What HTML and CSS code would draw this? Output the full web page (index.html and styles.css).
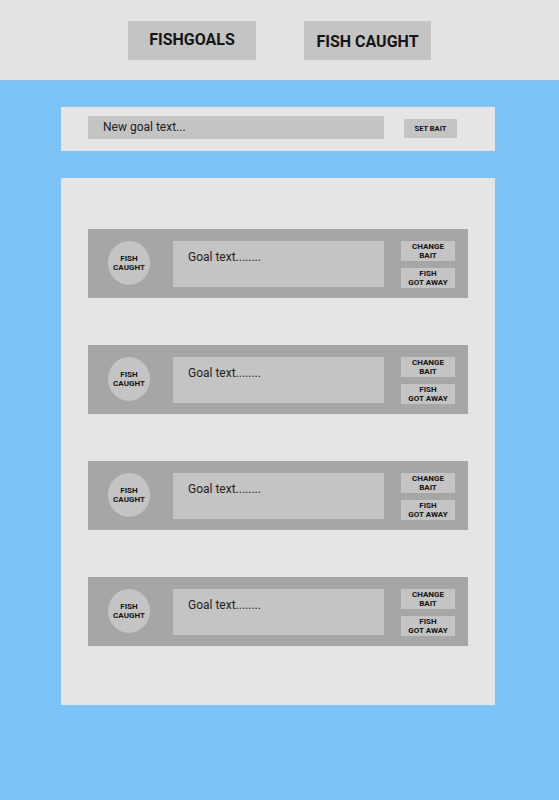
FILE: index.html
```html
<!DOCTYPE html>
<html>
<head>
<meta charset="utf-8">
<link rel="stylesheet" href="styles.css">
</head>
<body>
<header class="topbar">
  <div class="tab tab-goals">FISHGOALS</div>
  <div class="tab tab-caught">FISH CAUGHT</div>
</header>
<main class="sea">
  <section class="new-goal">
    <div class="goal-input">New goal text...</div>
    <div class="set-bait">SET BAIT</div>
  </section>
  <section class="goal-list">
    <div class="goal-card">
      <div class="caught-btn">FISH<br>CAUGHT</div>
      <div class="goal-text">Goal text........</div>
      <div class="actions">
        <div class="act">CHANGE<br>BAIT</div>
        <div class="act">FISH<br>GOT AWAY</div>
      </div>
    </div>
    <div class="goal-card">
      <div class="caught-btn">FISH<br>CAUGHT</div>
      <div class="goal-text">Goal text........</div>
      <div class="actions">
        <div class="act">CHANGE<br>BAIT</div>
        <div class="act">FISH<br>GOT AWAY</div>
      </div>
    </div>
    <div class="goal-card">
      <div class="caught-btn">FISH<br>CAUGHT</div>
      <div class="goal-text">Goal text........</div>
      <div class="actions">
        <div class="act">CHANGE<br>BAIT</div>
        <div class="act">FISH<br>GOT AWAY</div>
      </div>
    </div>
    <div class="goal-card">
      <div class="caught-btn">FISH<br>CAUGHT</div>
      <div class="goal-text">Goal text........</div>
      <div class="actions">
        <div class="act">CHANGE<br>BAIT</div>
        <div class="act">FISH<br>GOT AWAY</div>
      </div>
    </div>
  </section>
</main>
</body>
</html>
```

FILE: styles.css
```css
* { box-sizing: border-box; }
html, body {
  margin: 0;
  padding: 0;
}
body {
  font-family: Roboto, "Liberation Sans", sans-serif;
  color: #111;
  background: #7cc3f8;
  width: 559px;
  height: 800px;
  overflow: hidden;
}
.topbar {
  height: 80px;
  background: #e3e3e3;
  display: flex;
  justify-content: center;
  align-items: flex-start;
  gap: 48px;
  padding-top: 21px;
}
.tab {
  width: 128px;
  height: 39px;
  background: #c4c4c4;
  display: flex;
  align-items: center;
  justify-content: center;
  font-size: 16px;
  font-weight: 700;
  color: #151515;
}
.tab-goals {
  padding-bottom: 3px;
}
.tab-caught {
  width: 127px;
  padding-top: 1px;
}
.sea {
  padding: 27px 0 0 61px;
}
.new-goal {
  width: 434px;
  height: 44px;
  background: #e5e5e5;
  display: flex;
  align-items: flex-start;
  padding: 9px 0 0 27px;
  gap: 20px;
}
.goal-input {
  width: 296px;
  height: 23px;
  background: #c4c4c4;
  font-size: 12px;
  line-height: 23px;
  padding-left: 15px;
  color: #222;
}
.set-bait {
  margin-top: 3px;
  width: 53px;
  height: 19px;
  background: #c4c4c4;
  font-size: 7.5px;
  font-weight: 700;
  display: flex;
  align-items: center;
  justify-content: center;
}
.goal-list {
  margin-top: 27px;
  width: 434px;
  height: 527px;
  background: #e5e5e5;
  padding: 51px 0 0 27px;
  display: flex;
  flex-direction: column;
  gap: 47px;
}
.goal-card {
  width: 380px;
  height: 69px;
  background: #a6a6a6;
  display: flex;
  align-items: flex-start;
  padding: 12px 0 0 20px;
}
.caught-btn {
  width: 42px;
  height: 44px;
  border-radius: 50%;
  background: #c4c4c4;
  font-size: 8px;
  font-weight: 700;
  line-height: 9.5px;
  text-align: center;
  display: flex;
  align-items: center;
  justify-content: center;
}
.goal-text {
  margin-left: 23px;
  width: 211px;
  height: 46px;
  background: #c4c4c4;
  font-size: 12px;
  padding: 9px 0 0 15px;
  color: #222;
}
.actions {
  margin-left: 17px;
  display: flex;
  flex-direction: column;
  gap: 7px;
}
.act {
  width: 54px;
  height: 20px;
  background: #c4c4c4;
  font-size: 8px;
  font-weight: 700;
  line-height: 9.3px;
  text-align: center;
  display: flex;
  align-items: center;
  justify-content: center;
}
```
